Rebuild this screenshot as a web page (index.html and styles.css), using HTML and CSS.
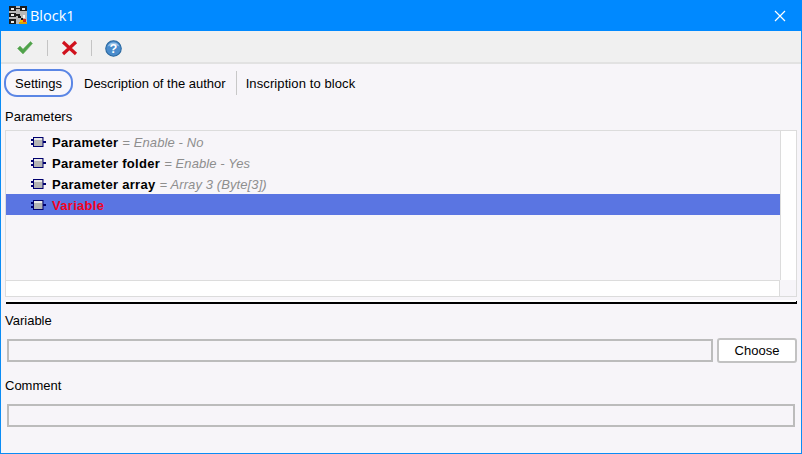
FILE: index.html
```html
<!DOCTYPE html>
<html lang="en">
<head>
<meta charset="utf-8">
<title>Block1</title>
<link rel="stylesheet" href="styles.css">
</head>
<body>
<div class="window">
  <header class="titlebar">
    <svg class="app-icon" width="18" height="18" viewBox="0 0 18 18" shape-rendering="crispEdges">
      <rect width="18" height="18" fill="#b8b8b8"/>
      <rect x="0" y="0" width="7" height="5" fill="#1c1c1c"/>
      <rect x="11" y="0" width="7" height="5" fill="#1c1c1c"/>
      <rect x="0" y="7" width="7" height="4" fill="#1c1c1c"/>
      <rect x="0" y="13" width="7" height="5" fill="#1c1c1c"/>
      <rect x="2" y="2" width="3" height="2" fill="#eee"/>
      <rect x="13" y="2" width="3" height="2" fill="#eee"/>
      <rect x="2" y="8" width="3" height="2" fill="#eee"/>
      <rect x="2" y="15" width="3" height="2" fill="#eee"/>
      <rect x="7" y="2" width="4" height="1" fill="#1c1c1c"/>
      <rect x="7" y="8" width="4" height="2" fill="#1c1c1c"/>
      <rect x="9" y="10" width="3" height="2" fill="#111"/>
      <rect x="12" y="12" width="2" height="2" fill="#111"/>
      <rect x="14" y="9" width="2" height="3" fill="#f4f4f4"/>
      <rect x="11" y="14" width="5" height="2" fill="#f2c200"/>
      <rect x="10" y="16" width="8" height="2" fill="#e0a000"/>
      <rect x="14" y="13" width="3" height="3" fill="#d8261c"/>
    </svg>
    <span class="title-text">Block1</span>
    <svg class="close" width="12" height="12" viewBox="0 0 12 12"><path d="M1 1l10 10M11 1L1 11" stroke="#fff" stroke-width="1.2" fill="none"/></svg>
  </header>
  <div class="toolbar">
    <svg class="tool ok" width="18" height="16" viewBox="0 0 18 16"><path d="M1.500 8.500l2.500-2.500 3 3.200L14.500 1.500l2 2L7 14z" fill="#4fa24a" stroke="#6fb068" stroke-width=".6"/></svg>
    <i class="tool-sep"></i>
    <svg class="tool cancel" width="17" height="16" viewBox="0 0 17 16"><path d="M2 2l13 12M15 2L2 14" stroke="#d0121d" stroke-width="3.2" fill="none"/></svg>
    <i class="tool-sep"></i>
    <svg class="tool help" width="17" height="17" viewBox="0 0 16 16">
      <circle cx="8" cy="8" r="7.300" fill="#4a8ccc" stroke="#2a689f" stroke-width="1"/>
      <path d="M2.500 6A6 6 0 0 1 13.500 6Q8 3.500 2.500 6z" fill="#9cc4e8"/>
      <text x="8" y="12" text-anchor="middle" class="help-mark">?</text>
    </svg>
  </div>
  <main class="content">
    <nav class="tabs">
      <span class="tab active">Settings</span>
      <span class="tab desc">Description of the author</span>
      <span class="tab insc">Inscription to block</span>
    </nav>
    <div class="label params-label">Parameters</div>
    <section class="listbox">
      <div class="rows">
        <div class="row">
          <svg class="pin" width="15" height="10" viewBox="0 0 15 10"><use href="#chip"/></svg>
          <b>Parameter</b><em>= Enable - No</em>
        </div>
        <div class="row">
          <svg class="pin" width="15" height="10" viewBox="0 0 15 10"><use href="#chip"/></svg>
          <b>Parameter folder</b><em>= Enable - Yes</em>
        </div>
        <div class="row">
          <svg class="pin" width="15" height="10" viewBox="0 0 15 10"><use href="#chip"/></svg>
          <b>Parameter array</b><em>= Array 3 (Byte[3])</em>
        </div>
        <div class="row selected">
          <svg class="pin" width="15" height="10" viewBox="0 0 15 10"><use href="#chip"/></svg>
          <b>Variable</b>
        </div>
      </div>
      <div class="vscroll"></div>
      <div class="hscroll"></div>
      <div class="corner"></div>
    </section>
    <div class="splitter"></div>
    <div class="label var-label">Variable</div>
    <div class="field-row">
      <div class="input"></div>
      <button class="choose" type="button">Choose</button>
    </div>
    <div class="label comment-label">Comment</div>
    <div class="input comment"></div>
  </main>
</div>
<svg class="defs" width="0" height="0">
  <defs>
    <g id="chip">
      <rect x="0" y="2" width="2" height="2" fill="#00006e"/>
      <rect x="0" y="6" width="2" height="2" fill="#00006e"/>
      <rect x="12" y="4" width="3" height="2" fill="#00006e"/>
      <rect x="2.500" y=".5" width="9.500" height="9" fill="#b4b4b4" stroke="#00006e"/>
      <rect x="3" y="1" width="8" height="2" fill="#e8e8e8"/>
    </g>
  </defs>
</svg>
</body>
</html>
```
FILE: styles.css
```css
* { box-sizing: border-box; }
html, body { margin: 0; padding: 0; }
body { width: 802px; height: 454px; overflow: hidden; font-family: "Liberation Sans", Arial, sans-serif; font-size: 13px; color: #000; }
.defs { display: block; height: 0; }
.window { width: 802px; height: 454px; display: flex; flex-direction: column; background: #f7f5f9; border: 1px solid #0a8cf5; border-top: 0; }
.titlebar { height: 31px; flex: none; margin: 0 -1px; background: #0089ff; color: #fff; display: flex; align-items: center; padding: 0 16px 0 9px; }
.app-icon { flex: none; margin-top: -1px; }
.title-text { margin-left: 3px; font-family: "Open Sans", "Liberation Sans", sans-serif; font-size: 14.5px; }
.close { margin-left: auto; }
.toolbar { height: 33px; flex: none; background: #f0f0f0; border-bottom: 2px solid #e2e2e2; display: flex; align-items: center; padding: 3px 0 0 15px; }
.tool { flex: none; display: block; }
.tool-sep { width: 1px; height: 16px; background: #c4c4c4; margin: 0 13px 0 13px; flex: none; }
.help-mark { font-family: "Liberation Sans", sans-serif; font-size: 12px; font-weight: bold; fill: #fff; }
.content { flex: 1; display: flex; flex-direction: column; padding: 5px 3px 0 3px; }
.tabs { display: flex; align-items: center; height: 28px; }
.tab { color: #000; white-space: nowrap; }
.tab.active { height: 28px; width: 69px; margin-right: 11px; border: 2px solid #5b86e5; border-radius: 13px; display: flex; align-items: center; justify-content: center; background: #f9f7fb; }
.tab.desc { padding-right: 10px; border-right: 1px solid #c8c8c8; height: 24px; line-height: 26px; }
.tab.insc { margin-left: 9px; letter-spacing: .1px; }
.label { color: #000; line-height: 15px; height: 15px; margin-left: 1px; }
.params-label { margin-top: 12px; }
.listbox { margin: 6px 1px 0 1px; height: 167px; border: 1px solid #dcdcdc; display: grid; grid-template-columns: 1fr 16px; grid-template-rows: 1fr 16px; background: #f7f5f9; }
.rows { min-width: 0; }
.row { height: 21px; display: flex; align-items: center; padding: 1px 0 0 25px; white-space: nowrap; }
.row b { font-size: 13px; letter-spacing: .3px; margin-left: 6px; }
.row em { color: #8e8e8e; font-size: 13px; letter-spacing: .1px; margin-left: 4px; }
.row.selected { background: #5a75e2; }
.row.selected b { color: #f50020; }
.pin { flex: none; margin-top: -1px; }
.vscroll { background: #fff; border-left: 1px solid #dcdcdc; }
.hscroll { background: #fff; border-top: 1px solid #dcdcdc; border-right: 1px solid #dcdcdc; }
.corner { background: #f7f5f9; }
.splitter { margin: 5px 1px 0 2px; height: 2px; border-bottom: 2px solid #000; position: relative; box-shadow: 0 -2px 0 #fff; }
.splitter::after { content: ""; position: absolute; right: 0; top: -1px; width: 1px; height: 3px; background: #000; }
.var-label { margin-top: 9px; }
.field-row { display: flex; align-items: center; gap: 4px; margin: 10px 1px 0 3px; }
.input { height: 23px; border: 2px solid #bcbcbc; background: #f7f5f9; flex: 1; }
.choose { width: 80px; height: 25px; flex: none; padding: 0; border: 2px solid #c2c2c2; border-radius: 3px; background: #fff; font: 13px "Liberation Sans", Arial, sans-serif; color: #000; }
.comment-label { margin-top: 15px; }
.input.comment { flex: none; margin: 11px 3px 0 3px; }
```
